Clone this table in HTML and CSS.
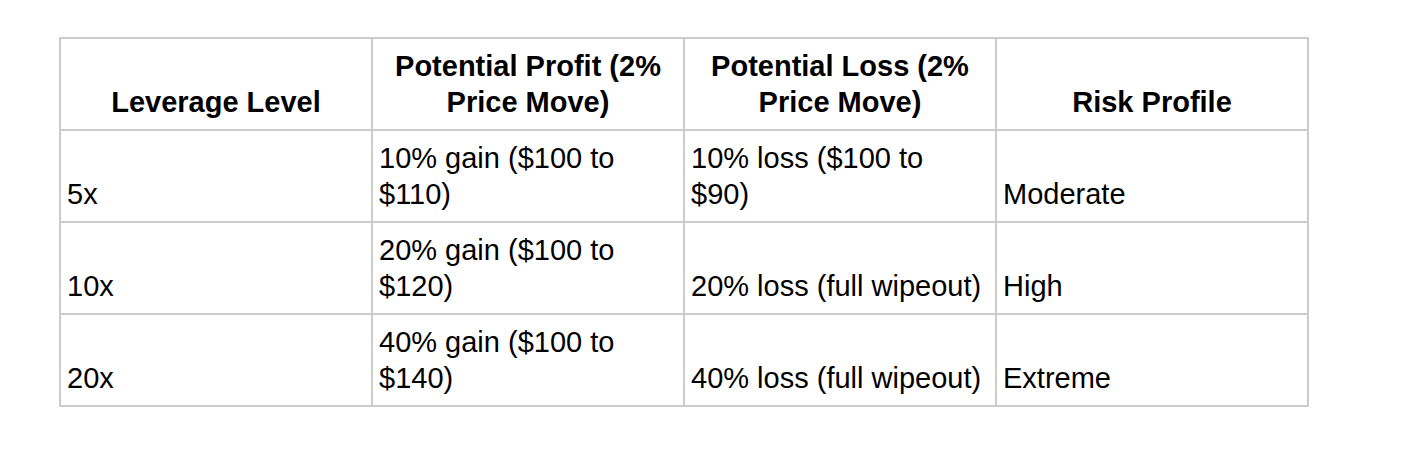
FILE: index.html
```html
<!DOCTYPE html>
<html lang="en">
<head>
<meta charset="utf-8">
<title>Leverage table</title>
<link rel="stylesheet" href="styles.css">
</head>
<body>
<table class="lev-table">
  <colgroup>
    <col class="c1"><col class="c2"><col class="c3"><col class="c4">
  </colgroup>
  <thead>
    <tr>
      <th>Leverage Level</th>
      <th>Potential Profit (2% Price Move)</th>
      <th>Potential Loss (2% Price Move)</th>
      <th>Risk Profile</th>
    </tr>
  </thead>
  <tbody>
    <tr>
      <td>5x</td>
      <td>10% gain ($100 to $110)</td>
      <td>10% loss ($100 to $90)</td>
      <td>Moderate</td>
    </tr>
    <tr>
      <td>10x</td>
      <td>20% gain ($100 to $120)</td>
      <td>20% loss (full wipeout)</td>
      <td>High</td>
    </tr>
    <tr>
      <td>20x</td>
      <td>40% gain ($100 to $140)</td>
      <td>40% loss (full wipeout)</td>
      <td>Extreme</td>
    </tr>
  </tbody>
</table>
</body>
</html>
```

FILE: styles.css
```css
html, body {
  margin: 0;
  padding: 0;
  background: #ffffff;
}

body {
  padding: 37px 0 0 59px;
  font-family: "Liberation Sans", Arial, Helvetica, sans-serif;
  color: #000000;
}

.lev-table {
  border-collapse: collapse;
  table-layout: fixed;
  width: 1248px;
  font-size: 29px;
  line-height: 36px;
}

.lev-table .c1,
.lev-table .c2,
.lev-table .c3 { width: 312px; }
.lev-table .c4 { width: 312px; }

.lev-table th,
.lev-table td {
  border: 2px solid #cccccc;
  padding: 9px 6px 9px 6px;
  vertical-align: bottom;
  text-align: left;
  height: 72px;
}

.lev-table th {
  font-weight: bold;
  text-align: center;
}

.lev-table td {
  font-weight: normal;
}
```
